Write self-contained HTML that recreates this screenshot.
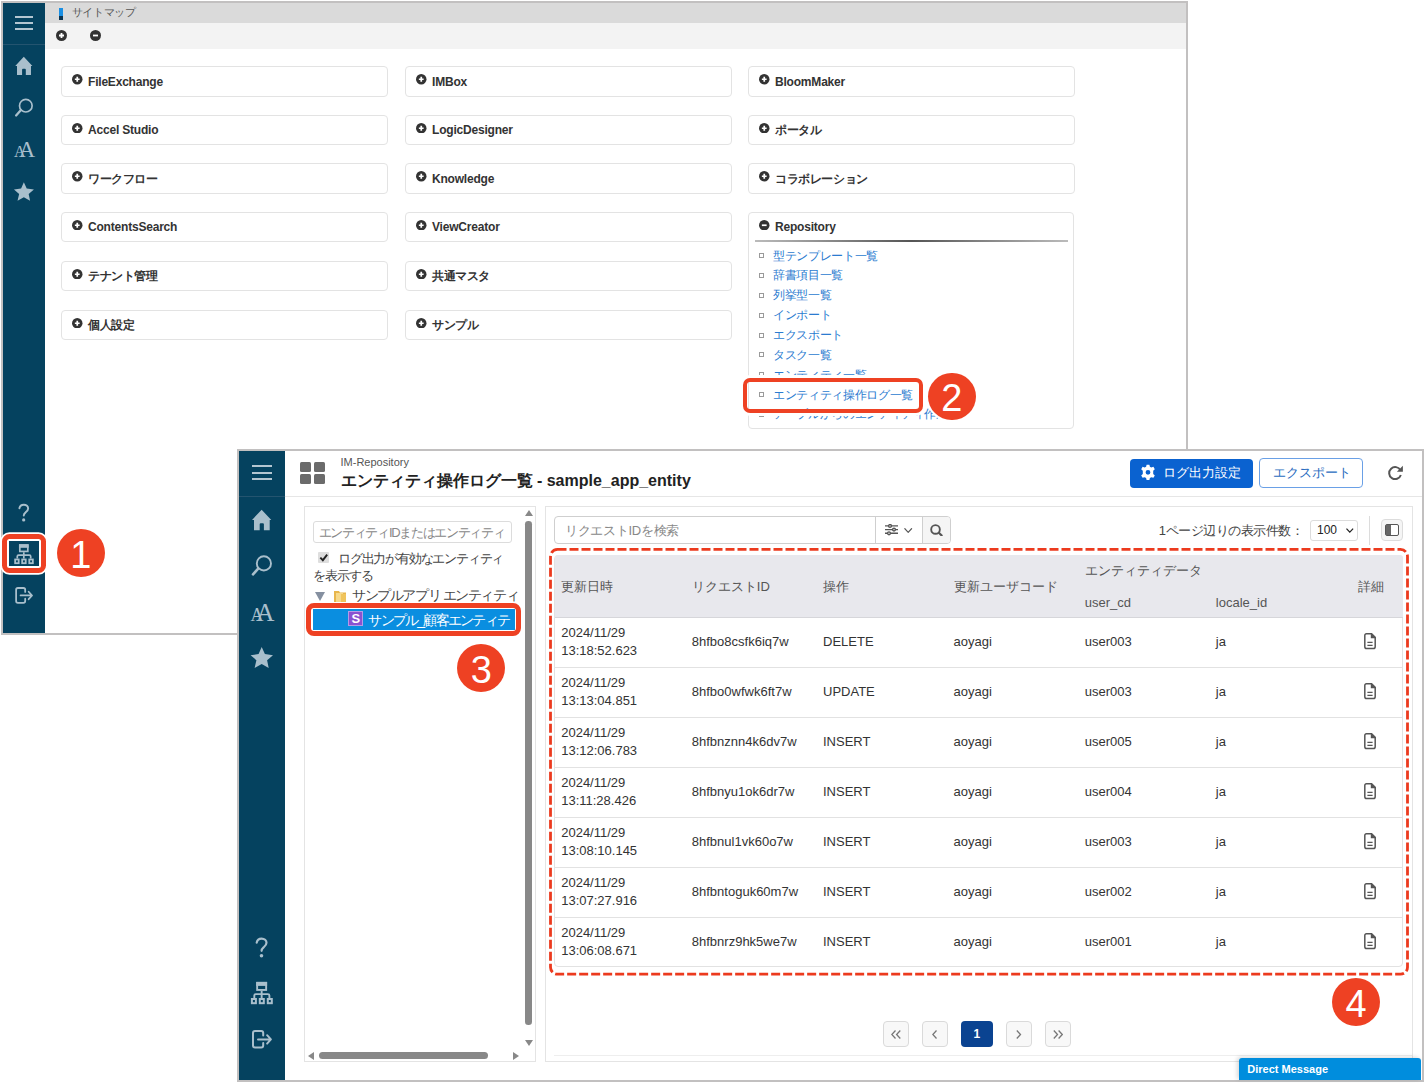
<!DOCTYPE html>
<html><head><meta charset="utf-8">
<style>
*{box-sizing:border-box;margin:0;padding:0}
html,body{width:1425px;height:1092px;overflow:hidden;background:#fff;font-family:"Liberation Sans",sans-serif;color:#333;position:relative}
div,span,svg{position:absolute}
.nw{white-space:nowrap}
.box{width:327px;height:30.5px;border:1px solid #e3e3e3;border-radius:4px;background:#fff}
.bt{font-size:12px;letter-spacing:-0.2px;font-weight:bold;color:#333;line-height:16px;white-space:nowrap}
.li{font-size:12px;letter-spacing:-0.35px;color:#2b7bd0;line-height:16px;white-space:nowrap}
.bul{width:5px;height:5px;border:1px solid #999}
.badge{width:48px;height:48px;border-radius:50%;background:#ee4123;color:#fff;font-size:38px;line-height:52px;text-align:center}
.td{font-size:13px;color:#333;line-height:18px;white-space:nowrap}
.th{font-size:13px;color:#555;line-height:18px;white-space:nowrap}
.pg{width:26px;height:25.5px;border:1px solid #ddd;border-radius:4px;background:#f8f8f8}
</style></head><body>
<div style="left:1px;top:1px;width:1187px;height:633.5px;border:2px solid #c2c0c0;background:#fff"></div>
<div style="left:3px;top:3px;width:41.5px;height:629.5px;background:#05425f"></div>
<div style="left:3px;top:44px;width:41.5px;height:1px;background:#24546f"></div>
<div style="left:15px;top:16.2px;width:17.5px;height:1.8px;background:#b4c6d1"></div>
<div style="left:15px;top:22.2px;width:17.5px;height:1.8px;background:#b4c6d1"></div>
<div style="left:15px;top:28.2px;width:17.5px;height:1.8px;background:#b4c6d1"></div>
<svg style="left:8.9px;top:49.6px" width="31.150000000000002" height="31.150000000000002" viewBox="0 0 35 35"><path fill="#a9bfcc" d="M16.65 7.7 L26.3 18 H24.7 V28.2 H18.9 V22.2 Q18.9 21.2 17.9 21.2 H15.7 Q14.7 21.2 14.7 22.2 V28.2 H9 V18 H7 Z"/></svg>
<svg style="left:8.9px;top:91.6px" width="31.150000000000002" height="31.150000000000002" viewBox="0 0 35 35"><circle cx="18.9" cy="15.4" r="7.1" fill="none" stroke="#a9bfcc" stroke-width="1.9"/><path d="M13.2 20.6 L8 26.4" stroke="#a9bfcc" stroke-width="2.6" stroke-linecap="round"/></svg>
<svg style="left:8.9px;top:135.1px" width="31.150000000000002" height="31.150000000000002" viewBox="0 0 35 35"><text x="5.6" y="24.8" font-family="Liberation Serif" font-size="18" fill="#a9bfcc">A</text><text x="11" y="24.8" font-family="Liberation Serif" font-size="25.5" fill="#a9bfcc">A</text></svg>
<svg style="left:8.9px;top:175.5px" width="31.150000000000002" height="31.150000000000002" viewBox="0 0 35 35"><path fill="#a9bfcc" d="M16.7 6.9 L19.9 14.1 L28 15.2 L22.1 20.2 L23.7 27.9 L16.7 23.9 L9.6 27.9 L11.4 20.2 L5.6 15.2 L13.6 14.1 Z"/></svg>
<svg style="left:8.6px;top:497.3px" width="31.150000000000002" height="31.150000000000002" viewBox="0 0 35 35"><path d="M11.7 12.6 C12.2 10 14 8.6 16.6 8.6 C19.5 8.6 21.5 10.5 21.5 12.8 C21.5 15 20 16.2 18.6 17.4 C17.3 18.5 16.6 19.4 16.6 20.8" fill="none" stroke="#a9bfcc" stroke-width="2.2" stroke-linecap="round"/><circle cx="16.5" cy="25.8" r="1.8" fill="#a9bfcc"/></svg>
<svg style="left:8.8px;top:579.9px" width="31.150000000000002" height="31.150000000000002" viewBox="0 0 35 35"><path d="M18.2 13.4 V11 Q18.2 9 16.2 9 H10 Q8 9 8 11 V23.6 Q8 25.6 10 25.6 H16.2 Q18.2 25.6 18.2 23.6 V21" fill="none" stroke="#a9bfcc" stroke-width="2" stroke-linecap="round"/><path d="M13 17.4 H25.6 M22.1 13.2 L25.9 17.4 L22.1 21.6" fill="none" stroke="#a9bfcc" stroke-width="2" stroke-linecap="round" stroke-linejoin="round"/></svg>
<div style="left:44.5px;top:3px;width:1141.5px;height:20px;background:#dadada"></div>
<div style="left:58.5px;top:8px;width:4.5px;height:12px;background:#1a8fe3"></div>
<div style="left:58.5px;top:16px;width:4.5px;height:4px;background:#0b3553"></div>
<span class="nw" style="left:71.5px;top:4.2px;font-size:11px;color:#555;line-height:16px;letter-spacing:-0.3px">サイトマップ</span>
<div style="left:44.5px;top:23px;width:1141.5px;height:25.5px;background:#f3f3f3"></div>
<svg style="left:56px;top:30px" width="11" height="11" viewBox="0 0 11 11"><circle cx="5.5" cy="5.5" r="5.5" fill="#333"/><path d="M3 5.5 H8 M5.5 3 V8" stroke="#fff" stroke-width="1.8"/></svg>
<svg style="left:89.5px;top:30px" width="11" height="11" viewBox="0 0 11 11"><circle cx="5.5" cy="5.5" r="5.5" fill="#333"/><path d="M3 5.5 H8" stroke="#fff" stroke-width="1.8"/></svg>
<div style="left:61px;top:66px;width:327px;height:30.5px;border:1px solid #e3e3e3;border-radius:4px;background:#fff"></div>
<svg style="left:72px;top:74.3px" width="10.5" height="10.5" viewBox="0 0 11 11"><circle cx="5.5" cy="5.5" r="5.5" fill="#333"/><path d="M3 5.5 H8 M5.5 3 V8" stroke="#fff" stroke-width="1.8"/></svg>
<span class="bt" style="left:88px;top:73.5px;">FileExchange</span>
<div style="left:61px;top:114.5px;width:327px;height:30.5px;border:1px solid #e3e3e3;border-radius:4px;background:#fff"></div>
<svg style="left:72px;top:122.8px" width="10.5" height="10.5" viewBox="0 0 11 11"><circle cx="5.5" cy="5.5" r="5.5" fill="#333"/><path d="M3 5.5 H8 M5.5 3 V8" stroke="#fff" stroke-width="1.8"/></svg>
<span class="bt" style="left:88px;top:122.0px;">Accel Studio</span>
<div style="left:61px;top:163px;width:327px;height:30.5px;border:1px solid #e3e3e3;border-radius:4px;background:#fff"></div>
<svg style="left:72px;top:171.3px" width="10.5" height="10.5" viewBox="0 0 11 11"><circle cx="5.5" cy="5.5" r="5.5" fill="#333"/><path d="M3 5.5 H8 M5.5 3 V8" stroke="#fff" stroke-width="1.8"/></svg>
<span class="bt" style="left:88px;top:170.5px;letter-spacing:-0.4px">ワークフロー</span>
<div style="left:61px;top:211.5px;width:327px;height:30.5px;border:1px solid #e3e3e3;border-radius:4px;background:#fff"></div>
<svg style="left:72px;top:219.8px" width="10.5" height="10.5" viewBox="0 0 11 11"><circle cx="5.5" cy="5.5" r="5.5" fill="#333"/><path d="M3 5.5 H8 M5.5 3 V8" stroke="#fff" stroke-width="1.8"/></svg>
<span class="bt" style="left:88px;top:219.0px;">ContentsSearch</span>
<div style="left:61px;top:260.5px;width:327px;height:30.5px;border:1px solid #e3e3e3;border-radius:4px;background:#fff"></div>
<svg style="left:72px;top:268.8px" width="10.5" height="10.5" viewBox="0 0 11 11"><circle cx="5.5" cy="5.5" r="5.5" fill="#333"/><path d="M3 5.5 H8 M5.5 3 V8" stroke="#fff" stroke-width="1.8"/></svg>
<span class="bt" style="left:88px;top:268.0px;letter-spacing:-0.4px">テナント管理</span>
<div style="left:61px;top:309.5px;width:327px;height:30.5px;border:1px solid #e3e3e3;border-radius:4px;background:#fff"></div>
<svg style="left:72px;top:317.8px" width="10.5" height="10.5" viewBox="0 0 11 11"><circle cx="5.5" cy="5.5" r="5.5" fill="#333"/><path d="M3 5.5 H8 M5.5 3 V8" stroke="#fff" stroke-width="1.8"/></svg>
<span class="bt" style="left:88px;top:317.0px;letter-spacing:-0.4px">個人設定</span>
<div style="left:405px;top:66px;width:327px;height:30.5px;border:1px solid #e3e3e3;border-radius:4px;background:#fff"></div>
<svg style="left:416px;top:74.3px" width="10.5" height="10.5" viewBox="0 0 11 11"><circle cx="5.5" cy="5.5" r="5.5" fill="#333"/><path d="M3 5.5 H8 M5.5 3 V8" stroke="#fff" stroke-width="1.8"/></svg>
<span class="bt" style="left:432px;top:73.5px;">IMBox</span>
<div style="left:405px;top:114.5px;width:327px;height:30.5px;border:1px solid #e3e3e3;border-radius:4px;background:#fff"></div>
<svg style="left:416px;top:122.8px" width="10.5" height="10.5" viewBox="0 0 11 11"><circle cx="5.5" cy="5.5" r="5.5" fill="#333"/><path d="M3 5.5 H8 M5.5 3 V8" stroke="#fff" stroke-width="1.8"/></svg>
<span class="bt" style="left:432px;top:122.0px;">LogicDesigner</span>
<div style="left:405px;top:163px;width:327px;height:30.5px;border:1px solid #e3e3e3;border-radius:4px;background:#fff"></div>
<svg style="left:416px;top:171.3px" width="10.5" height="10.5" viewBox="0 0 11 11"><circle cx="5.5" cy="5.5" r="5.5" fill="#333"/><path d="M3 5.5 H8 M5.5 3 V8" stroke="#fff" stroke-width="1.8"/></svg>
<span class="bt" style="left:432px;top:170.5px;">Knowledge</span>
<div style="left:405px;top:211.5px;width:327px;height:30.5px;border:1px solid #e3e3e3;border-radius:4px;background:#fff"></div>
<svg style="left:416px;top:219.8px" width="10.5" height="10.5" viewBox="0 0 11 11"><circle cx="5.5" cy="5.5" r="5.5" fill="#333"/><path d="M3 5.5 H8 M5.5 3 V8" stroke="#fff" stroke-width="1.8"/></svg>
<span class="bt" style="left:432px;top:219.0px;">ViewCreator</span>
<div style="left:405px;top:260.5px;width:327px;height:30.5px;border:1px solid #e3e3e3;border-radius:4px;background:#fff"></div>
<svg style="left:416px;top:268.8px" width="10.5" height="10.5" viewBox="0 0 11 11"><circle cx="5.5" cy="5.5" r="5.5" fill="#333"/><path d="M3 5.5 H8 M5.5 3 V8" stroke="#fff" stroke-width="1.8"/></svg>
<span class="bt" style="left:432px;top:268.0px;letter-spacing:-0.4px">共通マスタ</span>
<div style="left:405px;top:309.5px;width:327px;height:30.5px;border:1px solid #e3e3e3;border-radius:4px;background:#fff"></div>
<svg style="left:416px;top:317.8px" width="10.5" height="10.5" viewBox="0 0 11 11"><circle cx="5.5" cy="5.5" r="5.5" fill="#333"/><path d="M3 5.5 H8 M5.5 3 V8" stroke="#fff" stroke-width="1.8"/></svg>
<span class="bt" style="left:432px;top:317.0px;letter-spacing:-0.4px">サンプル</span>
<div style="left:748px;top:66px;width:327px;height:30.5px;border:1px solid #e3e3e3;border-radius:4px;background:#fff"></div>
<svg style="left:759px;top:74.3px" width="10.5" height="10.5" viewBox="0 0 11 11"><circle cx="5.5" cy="5.5" r="5.5" fill="#333"/><path d="M3 5.5 H8 M5.5 3 V8" stroke="#fff" stroke-width="1.8"/></svg>
<span class="bt" style="left:775px;top:73.5px;">BloomMaker</span>
<div style="left:748px;top:114.5px;width:327px;height:30.5px;border:1px solid #e3e3e3;border-radius:4px;background:#fff"></div>
<svg style="left:759px;top:122.8px" width="10.5" height="10.5" viewBox="0 0 11 11"><circle cx="5.5" cy="5.5" r="5.5" fill="#333"/><path d="M3 5.5 H8 M5.5 3 V8" stroke="#fff" stroke-width="1.8"/></svg>
<span class="bt" style="left:775px;top:122.0px;letter-spacing:-0.4px">ポータル</span>
<div style="left:748px;top:163px;width:327px;height:30.5px;border:1px solid #e3e3e3;border-radius:4px;background:#fff"></div>
<svg style="left:759px;top:171.3px" width="10.5" height="10.5" viewBox="0 0 11 11"><circle cx="5.5" cy="5.5" r="5.5" fill="#333"/><path d="M3 5.5 H8 M5.5 3 V8" stroke="#fff" stroke-width="1.8"/></svg>
<span class="bt" style="left:775px;top:170.5px;letter-spacing:-0.4px">コラボレーション</span>
<div style="left:748px;top:211.5px;width:326px;height:217px;border:1px solid #e3e3e3;border-radius:4px;background:#fff"></div>
<svg style="left:759px;top:219.8px" width="10.5" height="10.5" viewBox="0 0 11 11"><circle cx="5.5" cy="5.5" r="5.5" fill="#333"/><path d="M3 5.5 H8" stroke="#fff" stroke-width="1.8"/></svg>
<span class="bt" style="left:775px;top:219.0px;">Repository</span>
<div style="left:755px;top:240px;width:313px;height:2px;background:linear-gradient(90deg,#bbb,#555 50%,#bbb)"></div>
<div style="left:759px;top:253.1px;width:5px;height:5px;border:1px solid #9a9a9a"></div>
<span class="li" style="left:773px;top:247.6px;">型テンプレート一覧</span>
<div style="left:759px;top:272.95px;width:5px;height:5px;border:1px solid #9a9a9a"></div>
<span class="li" style="left:773px;top:267.45px;">辞書項目一覧</span>
<div style="left:759px;top:292.8px;width:5px;height:5px;border:1px solid #9a9a9a"></div>
<span class="li" style="left:773px;top:287.3px;">列挙型一覧</span>
<div style="left:759px;top:312.65px;width:5px;height:5px;border:1px solid #9a9a9a"></div>
<span class="li" style="left:773px;top:307.15px;">インポート</span>
<div style="left:759px;top:332.5px;width:5px;height:5px;border:1px solid #9a9a9a"></div>
<span class="li" style="left:773px;top:327.0px;">エクスポート</span>
<div style="left:759px;top:352.35px;width:5px;height:5px;border:1px solid #9a9a9a"></div>
<span class="li" style="left:773px;top:346.85px;">タスク一覧</span>
<div style="left:759px;top:372.2px;width:5px;height:5px;border:1px solid #9a9a9a"></div>
<span class="li" style="left:773px;top:366.7px;">エンティティ一覧</span>
<div style="left:759px;top:392.05px;width:5px;height:5px;border:1px solid #9a9a9a"></div>
<span class="li" style="left:773px;top:386.55px;">エンティティ操作ログ一覧</span>
<div style="left:759px;top:411.9px;width:5px;height:5px;border:1px solid #9a9a9a"></div>
<span class="li" style="left:773px;top:406.4px;">テーブルからのエンティティ作成</span>
<div style="left:743.4px;top:378.4px;width:179.3px;height:34.2px;border:4px solid #ee4123;border-radius:7px;box-shadow:0 0 0 3px #fff;background:transparent"></div>
<div class="badge" style="left:928px;top:372.5px;width:47.5px;height:47.5px;line-height:50px;box-shadow:0 0 0 2px #fff">2</div>
<div style="left:2.06px;top:534px;width:43.7px;height:38.6px;border:5px solid #ee4123;border-radius:7.5px;box-shadow:0 0 0 1.8px #fff;background:#fff"></div>
<div style="left:9.16px;top:541px;width:29.7px;height:25px;background:#05425f"></div>
<svg style="left:8.75px;top:538.75px" width="31.150000000000002" height="31.150000000000002" viewBox="0 0 35 35"><rect x="12.15" y="6.85" width="9" height="7.1" fill="none" stroke="#a9bfcc" stroke-width="1.9"/><rect x="11.2" y="5.9" width="10.9" height="4" fill="#a9bfcc"/><path d="M16.65 14.9 V22 M9.3 22 V19.6 Q9.3 18.1 10.8 18.1 H22.9 Q24.4 18.1 24.4 19.6 V22" fill="none" stroke="#a9bfcc" stroke-width="1.9"/><g fill="none" stroke="#a9bfcc" stroke-width="2"><rect x="6.9" y="23" width="4" height="4.2"/><rect x="14.8" y="23" width="4" height="4.2"/><rect x="22.8" y="23" width="4" height="4.2"/></g></svg>
<div class="badge" style="left:56.8px;top:528.9px">1</div>
<div style="left:237px;top:449px;width:1186.5px;height:633px;border:2px solid #c2c0c0;background:#fff"></div>
<div style="left:239px;top:451px;width:46px;height:629px;background:#05425f"></div>
<div style="left:239px;top:495.5px;width:46px;height:1px;background:#24546f"></div>
<div style="left:252px;top:465.2px;width:19.5px;height:2px;background:#b4c6d1"></div>
<div style="left:252px;top:471.6px;width:19.5px;height:2px;background:#b4c6d1"></div>
<div style="left:252px;top:478px;width:19.5px;height:2px;background:#b4c6d1"></div>
<svg style="left:245px;top:502px" width="35.0" height="35.0" viewBox="0 0 35 35"><path fill="#a9bfcc" d="M16.65 7.7 L26.3 18 H24.7 V28.2 H18.9 V22.2 Q18.9 21.2 17.9 21.2 H15.7 Q14.7 21.2 14.7 22.2 V28.2 H9 V18 H7 Z"/></svg>
<svg style="left:245px;top:548px" width="35.0" height="35.0" viewBox="0 0 35 35"><circle cx="18.9" cy="15.4" r="7.1" fill="none" stroke="#a9bfcc" stroke-width="1.9"/><path d="M13.2 20.6 L8 26.4" stroke="#a9bfcc" stroke-width="2.6" stroke-linecap="round"/></svg>
<svg style="left:245px;top:596px" width="35.0" height="35.0" viewBox="0 0 35 35"><text x="5.6" y="24.8" font-family="Liberation Serif" font-size="18" fill="#a9bfcc">A</text><text x="11" y="24.8" font-family="Liberation Serif" font-size="25.5" fill="#a9bfcc">A</text></svg>
<svg style="left:245px;top:640px" width="35.0" height="35.0" viewBox="0 0 35 35"><path fill="#a9bfcc" d="M16.7 6.9 L19.9 14.1 L28 15.2 L22.1 20.2 L23.7 27.9 L16.7 23.9 L9.6 27.9 L11.4 20.2 L5.6 15.2 L13.6 14.1 Z"/></svg>
<svg style="left:245px;top:930px" width="35.0" height="35.0" viewBox="0 0 35 35"><path d="M11.7 12.6 C12.2 10 14 8.6 16.6 8.6 C19.5 8.6 21.5 10.5 21.5 12.8 C21.5 15 20 16.2 18.6 17.4 C17.3 18.5 16.6 19.4 16.6 20.8" fill="none" stroke="#a9bfcc" stroke-width="2.2" stroke-linecap="round"/><circle cx="16.5" cy="25.8" r="1.8" fill="#a9bfcc"/></svg>
<svg style="left:245px;top:976px" width="35.0" height="35.0" viewBox="0 0 35 35"><rect x="12.15" y="6.85" width="9" height="7.1" fill="none" stroke="#a9bfcc" stroke-width="1.9"/><rect x="11.2" y="5.9" width="10.9" height="4" fill="#a9bfcc"/><path d="M16.65 14.9 V22 M9.3 22 V19.6 Q9.3 18.1 10.8 18.1 H22.9 Q24.4 18.1 24.4 19.6 V22" fill="none" stroke="#a9bfcc" stroke-width="1.9"/><g fill="none" stroke="#a9bfcc" stroke-width="2"><rect x="6.9" y="23" width="4" height="4.2"/><rect x="14.8" y="23" width="4" height="4.2"/><rect x="22.8" y="23" width="4" height="4.2"/></g></svg>
<svg style="left:245px;top:1022px" width="35.0" height="35.0" viewBox="0 0 35 35"><path d="M18.2 13.4 V11 Q18.2 9 16.2 9 H10 Q8 9 8 11 V23.6 Q8 25.6 10 25.6 H16.2 Q18.2 25.6 18.2 23.6 V21" fill="none" stroke="#a9bfcc" stroke-width="2" stroke-linecap="round"/><path d="M13 17.4 H25.6 M22.1 13.2 L25.9 17.4 L22.1 21.6" fill="none" stroke="#a9bfcc" stroke-width="2" stroke-linecap="round" stroke-linejoin="round"/></svg>
<div style="left:285px;top:495.5px;width:1136.5px;height:1px;background:#e6e6e6"></div>
<div style="left:300.2px;top:461.9px;width:10.6px;height:10px;background:#6b6b6b;border-radius:1.5px"></div>
<div style="left:314.4px;top:461.9px;width:10.6px;height:10px;background:#6b6b6b;border-radius:1.5px"></div>
<div style="left:300.2px;top:473.8px;width:10.6px;height:10px;background:#6b6b6b;border-radius:1.5px"></div>
<div style="left:314.4px;top:473.8px;width:10.6px;height:10px;background:#6b6b6b;border-radius:1.5px"></div>
<span class="nw" style="left:340.5px;top:455px;font-size:11px;color:#555;line-height:14px">IM-Repository</span>
<span class="nw" style="left:340.5px;top:471px;font-size:16px;font-weight:bold;color:#222;line-height:19px">エンティティ操作ログ一覧 - sample_app_entity</span>
<div style="left:1129.7px;top:458.7px;width:123px;height:29.2px;background:#0a62d0;border-radius:4px"></div>
<svg style="left:1139.7px;top:464.3px" width="16" height="16.7" viewBox="0 0 16 16"><path fill="#fff" fill-rule="evenodd" d="M6.6 0.3 H9.4 L9.9 2.4 L11.3 3.2 L13.4 2.5 L14.8 4.9 L13.2 6.4 V9.6 L14.8 11.1 L13.4 13.5 L11.3 12.8 L9.9 13.6 L9.4 15.7 H6.6 L6.1 13.6 L4.7 12.8 L2.6 13.5 L1.2 11.1 L2.8 9.6 V6.4 L1.2 4.9 L2.6 2.5 L4.7 3.2 L6.1 2.4 Z M8 5.6 A2.4 2.4 0 1 0 8 10.4 A2.4 2.4 0 1 0 8 5.6 Z"/></svg>
<span class="nw" style="left:1162.8px;top:463.8px;font-size:13px;color:#fff;line-height:17px">ログ出力設定</span>
<div style="left:1259.3px;top:458.2px;width:103.7px;height:30px;border:1px solid #6aa0e6;border-radius:4px;background:#fff"></div>
<span class="nw" style="left:1273px;top:463.5px;font-size:13px;color:#2a6cc0;line-height:17px">エクスポート</span>
<svg style="left:1386.5px;top:465px" width="16.5" height="16" viewBox="0 0 16 16"><path d="M13.2 5.2 A6 6 0 1 0 13.6 10" fill="none" stroke="#555" stroke-width="2"/><path d="M15.6 0.8 V6.8 H9.6 Z" fill="#555"/></svg>
<div style="left:303.5px;top:506px;width:232px;height:556px;border:1px solid #e4e4e4;background:#fff"></div>
<div style="left:313.4px;top:521px;width:199.1px;height:21.6px;border:1px solid #dcdcdc;border-radius:3px;background:#fff;overflow:hidden"></div>
<span class="nw" style="left:318.7px;top:523.5px;font-size:13px;color:#888;line-height:17px;width:192px;overflow:hidden;letter-spacing:-1.3px">エンティティIDまたはエンティティ</span>
<div style="left:317.5px;top:551.8px;width:11.4px;height:11.4px;background:#dedede;border-radius:1px"></div>
<svg style="left:318.5px;top:553px" width="9.5" height="9" viewBox="0 0 10 10"><path d="M1.2 5.2 L4 8 L8.8 1.8" fill="none" stroke="#222" stroke-width="2.1"/></svg>
<span class="nw" style="left:338px;top:549.5px;font-size:13px;color:#444;line-height:17px;letter-spacing:-1.2px">ログ出力が有効なエンティティ</span>
<span class="nw" style="left:313.4px;top:567px;font-size:13px;color:#444;line-height:17px;letter-spacing:-1.2px">を表示する</span>
<svg style="left:315.2px;top:592px" width="10" height="9" viewBox="0 0 10 9"><path d="M0 0 H10 L5 9 Z" fill="#8590a0"/></svg>
<svg style="left:334px;top:589.5px" width="13" height="12" viewBox="0 0 13 12"><path d="M0 1 H5 L6 2.5 H12 V12 H0 Z" fill="#e8b64c"/><path d="M2 3 H9 V12 H2 Z" fill="#f7d98a"/><path d="M7 4 H12 V12 H7 Z" fill="#f0c45c"/></svg>
<span class="nw" style="left:352px;top:587px;font-size:14px;color:#444;line-height:17px;letter-spacing:-1.4px;width:170px;overflow:hidden">サンプルアプリ エンティティ</span>
<div style="left:312.5px;top:609px;width:202.7px;height:21.2px;background:#0a8ee0"></div>
<div style="left:348.2px;top:611px;width:15.2px;height:15px;background:#8a52d0;border:1px solid #b59ae6"></div>
<span class="nw" style="left:351.5px;top:610.5px;font-size:13px;font-weight:bold;color:#fff;line-height:15px">S</span>
<span class="nw" style="left:368.3px;top:610.5px;font-size:14px;color:#fff;line-height:18px;letter-spacing:-1.75px;width:147px;overflow:hidden">サンプル_顧客エンティテ</span>
<div style="left:306.4px;top:603.2px;width:214.9px;height:33.3px;border:5px solid #ee4123;border-radius:8px"></div>
<div class="badge" style="left:457.3px;top:643.7px">3</div>
<svg style="left:524.5px;top:510px" width="8" height="6" viewBox="0 0 8 6"><path d="M0 6 L4 0 L8 6 Z" fill="#888"/></svg>
<div style="left:525.2px;top:521px;width:6.6px;height:503.5px;background:#888;border-radius:3.3px"></div>
<svg style="left:524.5px;top:1039.6px" width="8" height="6" viewBox="0 0 8 6"><path d="M0 0 L4 6 L8 0 Z" fill="#888"/></svg>
<div style="left:319.2px;top:1051.7px;width:168.7px;height:7.3px;background:#888;border-radius:3.6px"></div>
<svg style="left:307.6px;top:1051.7px" width="6" height="8" viewBox="0 0 6 8"><path d="M6 0 L0 4 L6 8 Z" fill="#888"/></svg>
<svg style="left:512.6px;top:1051.7px" width="6" height="8" viewBox="0 0 6 8"><path d="M0 0 L6 4 L0 8 Z" fill="#888"/></svg>
<div style="left:544.5px;top:506px;width:868.5px;height:556px;border:1px solid #e4e4e4;background:#fff"></div>
<div style="left:554.1px;top:516.2px;width:397.1px;height:28.2px;border:1px solid #cfcfcf;border-radius:4px;background:#fff"></div>
<div style="left:874.6px;top:516.2px;width:1px;height:28.2px;background:#cfcfcf"></div>
<div style="left:922.3px;top:516.2px;width:1px;height:28.2px;background:#cfcfcf"></div>
<div style="left:923.3px;top:517.2px;width:26.9px;height:26.2px;background:#f5f5f5;border-radius:0 3px 3px 0"></div>
<span class="nw" style="left:565px;top:521.5px;font-size:13px;color:#888;line-height:18px;letter-spacing:-0.3px">リクエストIDを検索</span>
<svg style="left:884.9px;top:524.4px" width="13" height="11.2" viewBox="0 0 13 11"><g stroke="#555" stroke-width="1.4" fill="#fff"><path d="M0 1.8 H13 M0 5.5 H13 M0 9.2 H13"/><circle cx="5" cy="1.8" r="1.4"/><circle cx="9" cy="5.5" r="1.4"/><circle cx="4" cy="9.2" r="1.4"/></g></svg>
<svg style="left:904.2px;top:528.3px" width="8.4" height="5" viewBox="0 0 8 5"><path d="M0.3 0.3 L4 4.3 L7.7 0.3" fill="none" stroke="#555" stroke-width="1.2"/></svg>
<svg style="left:930.2px;top:523.7px" width="13" height="12.8" viewBox="0 0 13 13"><circle cx="5.5" cy="5.5" r="4.4" fill="none" stroke="#555" stroke-width="1.9"/><path d="M8.6 8.6 L12.3 12.3" stroke="#555" stroke-width="2.2"/></svg>
<span class="nw" style="left:1158.8px;top:521.5px;font-size:13px;color:#444;line-height:18px;letter-spacing:-0.5px">1ページ辺りの表示件数：</span>
<div style="left:1310px;top:520.1px;width:47.5px;height:20.6px;border:1px solid #dcdcdc;border-radius:3px;background:#fff"></div>
<span class="nw" style="left:1317px;top:523px;font-size:12px;color:#222;line-height:15px">100</span>
<svg style="left:1346.4px;top:528px" width="7.6" height="5" viewBox="0 0 8 5"><path d="M0.5 0.5 L4 4.2 L7.5 0.5" fill="none" stroke="#222" stroke-width="1.3"/></svg>
<div style="left:1369px;top:516px;width:1px;height:28.7px;background:#dcdcdc"></div>
<div style="left:1381.1px;top:519.3px;width:21.6px;height:22.2px;border:1px solid #dcdcdc;border-radius:4px;background:#f5f5f5"></div>
<div style="left:1385.1px;top:524.1px;width:13.8px;height:12.1px;border:1.4px solid #555;border-radius:2px;background:#fff"></div>
<div style="left:1385.8px;top:524.8px;width:5.4px;height:10.7px;background:#666"></div>
<div style="left:554.1px;top:554.6px;width:849.3px;height:412.8px;border:1px solid #e2e2e2;border-radius:4px;background:#fff"></div>
<div style="left:554.6px;top:555.1px;width:848.3px;height:62.3px;background:#e8e8ed;border-radius:3px 3px 0 0"></div>
<div style="left:554.6px;top:617.2px;width:848.3px;height:1px;background:#d6d6da"></div>
<span class="th" style="left:561.2px;top:577.5px;">更新日時</span>
<span class="th" style="left:691.8px;top:577.5px;">リクエストID</span>
<span class="th" style="left:823px;top:577.5px;">操作</span>
<span class="th" style="left:953.5px;top:577.5px;">更新ユーザコード</span>
<span class="th" style="left:1084.8px;top:562px;">エンティティデータ</span>
<span class="th" style="left:1084.8px;top:593.5px;">user_cd</span>
<span class="th" style="left:1215.8px;top:593.5px;">locale_id</span>
<span class="th" style="left:1357.7px;top:578px;">詳細</span>
<span class="td" style="left:561.2px;top:623.9px;">2024/11/29<br>13:18:52.623</span>
<span class="td" style="left:691.8px;top:633.4px;">8hfbo8csfk6iq7w</span>
<span class="td" style="left:823px;top:633.4px;">DELETE</span>
<span class="td" style="left:953.5px;top:633.4px;">aoyagi</span>
<span class="td" style="left:1084.8px;top:633.4px;">user003</span>
<span class="td" style="left:1215.8px;top:633.4px;">ja</span>
<svg style="left:1364px;top:633.3px" width="12" height="16.4" viewBox="0 0 12 16.4"><path d="M2.4 0.8 H7.6 L11.2 4.4 V13.8 A1.8 1.8 0 0 1 9.4 15.6 H2.6 A1.8 1.8 0 0 1 0.8 13.8 V2.4 A1.6 1.6 0 0 1 2.4 0.8 Z" fill="none" stroke="#555" stroke-width="1.5"/><path d="M7.4 0.8 V4.6 H11.2" fill="#555" stroke="#555" stroke-width="1.2"/><path d="M3.4 9.3 H8.6 M3.4 12.3 H8.6" stroke="#555" stroke-width="1.3"/></svg>
<div style="left:554.6px;top:667.4px;width:848.3px;height:1px;background:#e2e2e2"></div>
<span class="td" style="left:561.2px;top:673.9px;">2024/11/29<br>13:13:04.851</span>
<span class="td" style="left:691.8px;top:683.4px;">8hfbo0wfwk6ft7w</span>
<span class="td" style="left:823px;top:683.4px;">UPDATE</span>
<span class="td" style="left:953.5px;top:683.4px;">aoyagi</span>
<span class="td" style="left:1084.8px;top:683.4px;">user003</span>
<span class="td" style="left:1215.8px;top:683.4px;">ja</span>
<svg style="left:1364px;top:683.3px" width="12" height="16.4" viewBox="0 0 12 16.4"><path d="M2.4 0.8 H7.6 L11.2 4.4 V13.8 A1.8 1.8 0 0 1 9.4 15.6 H2.6 A1.8 1.8 0 0 1 0.8 13.8 V2.4 A1.6 1.6 0 0 1 2.4 0.8 Z" fill="none" stroke="#555" stroke-width="1.5"/><path d="M7.4 0.8 V4.6 H11.2" fill="#555" stroke="#555" stroke-width="1.2"/><path d="M3.4 9.3 H8.6 M3.4 12.3 H8.6" stroke="#555" stroke-width="1.3"/></svg>
<div style="left:554.6px;top:717.4px;width:848.3px;height:1px;background:#e2e2e2"></div>
<span class="td" style="left:561.2px;top:723.9px;">2024/11/29<br>13:12:06.783</span>
<span class="td" style="left:691.8px;top:733.4px;">8hfbnznn4k6dv7w</span>
<span class="td" style="left:823px;top:733.4px;">INSERT</span>
<span class="td" style="left:953.5px;top:733.4px;">aoyagi</span>
<span class="td" style="left:1084.8px;top:733.4px;">user005</span>
<span class="td" style="left:1215.8px;top:733.4px;">ja</span>
<svg style="left:1364px;top:733.3px" width="12" height="16.4" viewBox="0 0 12 16.4"><path d="M2.4 0.8 H7.6 L11.2 4.4 V13.8 A1.8 1.8 0 0 1 9.4 15.6 H2.6 A1.8 1.8 0 0 1 0.8 13.8 V2.4 A1.6 1.6 0 0 1 2.4 0.8 Z" fill="none" stroke="#555" stroke-width="1.5"/><path d="M7.4 0.8 V4.6 H11.2" fill="#555" stroke="#555" stroke-width="1.2"/><path d="M3.4 9.3 H8.6 M3.4 12.3 H8.6" stroke="#555" stroke-width="1.3"/></svg>
<div style="left:554.6px;top:767.4px;width:848.3px;height:1px;background:#e2e2e2"></div>
<span class="td" style="left:561.2px;top:773.9px;">2024/11/29<br>13:11:28.426</span>
<span class="td" style="left:691.8px;top:783.4px;">8hfbnyu1ok6dr7w</span>
<span class="td" style="left:823px;top:783.4px;">INSERT</span>
<span class="td" style="left:953.5px;top:783.4px;">aoyagi</span>
<span class="td" style="left:1084.8px;top:783.4px;">user004</span>
<span class="td" style="left:1215.8px;top:783.4px;">ja</span>
<svg style="left:1364px;top:783.3px" width="12" height="16.4" viewBox="0 0 12 16.4"><path d="M2.4 0.8 H7.6 L11.2 4.4 V13.8 A1.8 1.8 0 0 1 9.4 15.6 H2.6 A1.8 1.8 0 0 1 0.8 13.8 V2.4 A1.6 1.6 0 0 1 2.4 0.8 Z" fill="none" stroke="#555" stroke-width="1.5"/><path d="M7.4 0.8 V4.6 H11.2" fill="#555" stroke="#555" stroke-width="1.2"/><path d="M3.4 9.3 H8.6 M3.4 12.3 H8.6" stroke="#555" stroke-width="1.3"/></svg>
<div style="left:554.6px;top:817.4px;width:848.3px;height:1px;background:#e2e2e2"></div>
<span class="td" style="left:561.2px;top:823.9px;">2024/11/29<br>13:08:10.145</span>
<span class="td" style="left:691.8px;top:833.4px;">8hfbnul1vk60o7w</span>
<span class="td" style="left:823px;top:833.4px;">INSERT</span>
<span class="td" style="left:953.5px;top:833.4px;">aoyagi</span>
<span class="td" style="left:1084.8px;top:833.4px;">user003</span>
<span class="td" style="left:1215.8px;top:833.4px;">ja</span>
<svg style="left:1364px;top:833.3px" width="12" height="16.4" viewBox="0 0 12 16.4"><path d="M2.4 0.8 H7.6 L11.2 4.4 V13.8 A1.8 1.8 0 0 1 9.4 15.6 H2.6 A1.8 1.8 0 0 1 0.8 13.8 V2.4 A1.6 1.6 0 0 1 2.4 0.8 Z" fill="none" stroke="#555" stroke-width="1.5"/><path d="M7.4 0.8 V4.6 H11.2" fill="#555" stroke="#555" stroke-width="1.2"/><path d="M3.4 9.3 H8.6 M3.4 12.3 H8.6" stroke="#555" stroke-width="1.3"/></svg>
<div style="left:554.6px;top:867.4px;width:848.3px;height:1px;background:#e2e2e2"></div>
<span class="td" style="left:561.2px;top:873.9px;">2024/11/29<br>13:07:27.916</span>
<span class="td" style="left:691.8px;top:883.4px;">8hfbntoguk60m7w</span>
<span class="td" style="left:823px;top:883.4px;">INSERT</span>
<span class="td" style="left:953.5px;top:883.4px;">aoyagi</span>
<span class="td" style="left:1084.8px;top:883.4px;">user002</span>
<span class="td" style="left:1215.8px;top:883.4px;">ja</span>
<svg style="left:1364px;top:883.3px" width="12" height="16.4" viewBox="0 0 12 16.4"><path d="M2.4 0.8 H7.6 L11.2 4.4 V13.8 A1.8 1.8 0 0 1 9.4 15.6 H2.6 A1.8 1.8 0 0 1 0.8 13.8 V2.4 A1.6 1.6 0 0 1 2.4 0.8 Z" fill="none" stroke="#555" stroke-width="1.5"/><path d="M7.4 0.8 V4.6 H11.2" fill="#555" stroke="#555" stroke-width="1.2"/><path d="M3.4 9.3 H8.6 M3.4 12.3 H8.6" stroke="#555" stroke-width="1.3"/></svg>
<div style="left:554.6px;top:917.4px;width:848.3px;height:1px;background:#e2e2e2"></div>
<span class="td" style="left:561.2px;top:923.9px;">2024/11/29<br>13:06:08.671</span>
<span class="td" style="left:691.8px;top:933.4px;">8hfbnrz9hk5we7w</span>
<span class="td" style="left:823px;top:933.4px;">INSERT</span>
<span class="td" style="left:953.5px;top:933.4px;">aoyagi</span>
<span class="td" style="left:1084.8px;top:933.4px;">user001</span>
<span class="td" style="left:1215.8px;top:933.4px;">ja</span>
<svg style="left:1364px;top:933.3px" width="12" height="16.4" viewBox="0 0 12 16.4"><path d="M2.4 0.8 H7.6 L11.2 4.4 V13.8 A1.8 1.8 0 0 1 9.4 15.6 H2.6 A1.8 1.8 0 0 1 0.8 13.8 V2.4 A1.6 1.6 0 0 1 2.4 0.8 Z" fill="none" stroke="#555" stroke-width="1.5"/><path d="M7.4 0.8 V4.6 H11.2" fill="#555" stroke="#555" stroke-width="1.2"/><path d="M3.4 9.3 H8.6 M3.4 12.3 H8.6" stroke="#555" stroke-width="1.3"/></svg>
<svg style="left:0;top:0" width="1425" height="1092"><rect x="550.5" y="549.4" width="857" height="424.8" rx="7" ry="7" fill="none" stroke="#ec3a1e" stroke-width="2.8" stroke-dasharray="9 3"/></svg>
<div class="badge" style="left:1332px;top:977.6px">4</div>
<div style="left:883.1px;top:1021.3px;width:25.8px;height:25.4px;border:1px solid #dadada;border-radius:4px;background:#f8f8f8"></div>
<svg style="left:891.0px;top:1029.5px" width="10" height="9" viewBox="0 0 10 9"><path d="M4.5 0.5 L0.8 4.5 L4.5 8.5 M9.3 0.5 L5.6 4.5 L9.3 8.5" fill="none" stroke="#777" stroke-width="1.3"/></svg>
<div style="left:922px;top:1021.3px;width:25.7px;height:25.4px;border:1px solid #dadada;border-radius:4px;background:#f8f8f8"></div>
<svg style="left:932.2px;top:1029.5px" width="5.3" height="9" viewBox="0 0 5.3 9"><path d="M4.5 0.5 L0.8 4.5 L4.5 8.5" fill="none" stroke="#777" stroke-width="1.3"/></svg>
<div style="left:1006.2px;top:1021.3px;width:25.6px;height:25.4px;border:1px solid #dadada;border-radius:4px;background:#f8f8f8"></div>
<svg style="left:1016.35px;top:1029.5px" width="5.3" height="9" viewBox="0 0 5.3 9"><path d="M0.8 0.5 L4.5 4.5 L0.8 8.5" fill="none" stroke="#777" stroke-width="1.3"/></svg>
<div style="left:1044.8px;top:1021.3px;width:25.9px;height:25.4px;border:1px solid #dadada;border-radius:4px;background:#f8f8f8"></div>
<svg style="left:1052.75px;top:1029.5px" width="10" height="9" viewBox="0 0 10 9"><path d="M0.8 0.5 L4.5 4.5 L0.8 8.5 M5.6 0.5 L9.3 4.5 L5.6 8.5" fill="none" stroke="#777" stroke-width="1.3"/></svg>
<div style="left:961px;top:1021.3px;width:31.7px;height:25.4px;background:#0a4391;border-radius:4px"></div>
<span class="nw" style="left:961px;top:1027px;width:31.7px;text-align:center;font-size:12px;font-weight:bold;color:#fff;line-height:14px">1</span>
<div style="left:554px;top:1055.3px;width:858px;height:1px;background:#eeeeee"></div>
<div style="left:1239.1px;top:1057.5px;width:182.3px;height:22.2px;background:#008ddd;border-radius:3px 3px 0 0;box-shadow:-2px -1px 4px rgba(0,0,0,0.15)"></div>
<span class="nw" style="left:1247.3px;top:1062px;font-size:11px;font-weight:bold;color:#fff;line-height:14px">Direct Message</span>
</body></html>
